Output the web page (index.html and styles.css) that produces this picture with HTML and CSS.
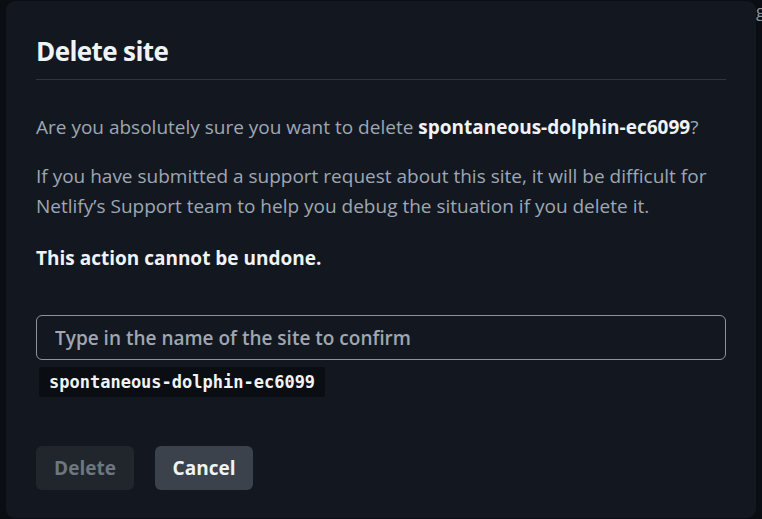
FILE: index.html
```html
<!DOCTYPE html>
<html>
<head>
<meta charset="utf-8">
<link rel="stylesheet" href="styles.css">
</head>
<body>
<span class="peek">g</span>
<div class="dialog">
  <h1 class="title">Delete site</h1>
  <p class="text">Are you absolutely sure you want to delete <strong class="strong">spontaneous-dolphin-ec6099</strong>?</p>
  <p class="text">If you have submitted a support request about this site, it will be difficult for Netlify’s Support team to help you debug the situation if you delete it.</p>
  <p class="warn">This action cannot be undone.</p>
  <div class="field">
    <input class="input" type="text" placeholder="Type in the name of the site to confirm">
    <code class="code">spontaneous-dolphin-ec6099</code>
  </div>
  <div class="actions">
    <button class="btn btn-delete" disabled>Delete</button>
    <button class="btn btn-cancel">Cancel</button>
  </div>
</div>
</body>
</html>
```
FILE: styles.css
```css
html, body {
  margin: 0;
  padding: 0;
  background: #0a0d12;
  width: 762px;
  height: 519px;
  overflow: hidden;
  font-family: "Open Sans", "Noto Sans", sans-serif;
}
body {
  position: relative;
  padding: 1px 6px 0 6px;
  box-sizing: border-box;
}
.peek {
  position: absolute;
  left: 756px;
  top: -1px;
  color: #8b949e;
  font-size: 17px;
}
.dialog {
  position: relative;
  background: #131820;
  border-radius: 9px;
  height: 517px;
  box-sizing: border-box;
  padding: 30px 30px 0 30px;
}
.title {
  margin: 0;
  color: #f0f3f6;
  font-size: 26px;
  font-weight: 700;
  line-height: 40px;
  padding-bottom: 8px;
  border-bottom: 1px solid #30363d;
  letter-spacing: -0.6px;
}
.text {
  margin: 32px 0 0 0;
  color: #9ea7b3;
  font-size: 19px;
  line-height: 30px;
}
.text + .text {
  margin-top: 19px;
}
.strong {
  color: #f0f3f6;
  font-weight: 700;
}
.warn {
  margin: 22px 0 0 0;
  color: #f0f3f6;
  font-size: 19px;
  line-height: 30px;
  font-weight: 700;
}
.field {
  margin-top: 42px;
  display: flex;
  flex-direction: column;
  align-items: flex-start;
  gap: 7px;
}
.input {
  width: 100%;
  height: 45px;
  box-sizing: border-box;
  background: transparent;
  border: 1px solid #8b949e;
  border-radius: 6px;
  padding: 0 18px;
  font-family: inherit;
  font-size: 19px;
  font-weight: 600;
  color: #f0f3f6;
  outline: none;
}
.input::placeholder {
  color: #9ea7b3;
}
.code {
  margin-left: 3px;
  background: #0a0d11;
  color: #f0f3f6;
  font-family: "DejaVu Sans Mono", monospace;
  font-weight: 700;
  font-size: 17px;
  line-height: 30px;
  padding: 0 10px;
  border-radius: 2px;
}
.actions {
  margin-top: 49px;
  display: flex;
  gap: 21px;
}
.btn {
  width: 98px;
  height: 44px;
  border: none;
  border-radius: 6px;
  font-family: inherit;
  font-size: 19px;
  font-weight: 700;
}
.btn-delete {
  background: #21262d;
  color: #6e7681;
}
.btn-cancel {
  background: #3b424b;
  color: #f0f3f6;
}
```
